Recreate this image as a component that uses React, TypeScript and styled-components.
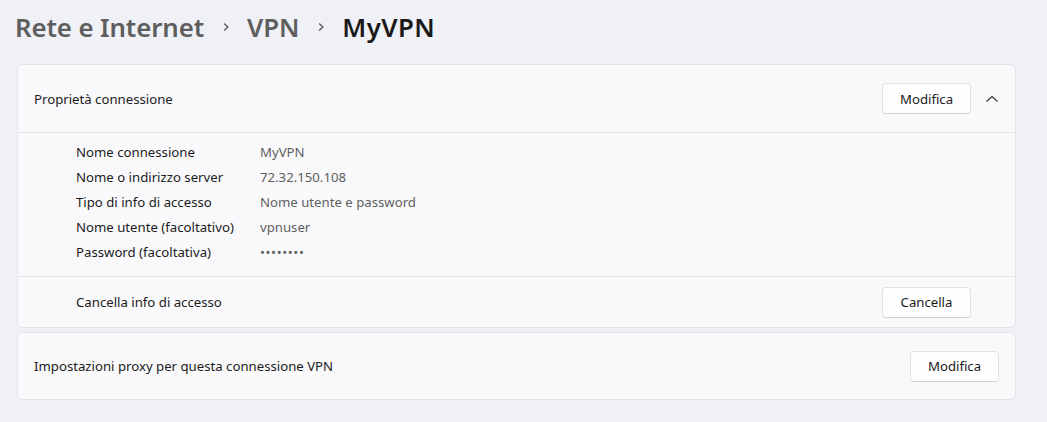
import React from "react";
import styled, { createGlobalStyle } from "styled-components";

const Global = createGlobalStyle`
  html, body { margin: 0; padding: 0; background: #f0f1f6; }
  body { font-family: "Segoe UI", "Noto Sans", "Open Sans", sans-serif; color: #1b1b1b; }
`;

const Page = styled.div`
  width: 1047px;
  height: 422px;
  box-sizing: border-box;
  padding: 7px 31px 0 17px;
  display: flex;
  flex-direction: column;
`;

const Breadcrumb = styled.div`
  display: flex;
  align-items: center;
  height: 40px;
  margin-left: -2px;
  margin-bottom: 17px;
  font-size: 25.8px;
  font-weight: 600;
  letter-spacing: -0.1px;
`;

const Crumb = styled.span<{ $current?: boolean }>`
  color: ${(p) => (p.$current ? "#1a1a1a" : "#5e5e5e")};
  letter-spacing: ${(p) => (p.$current ? "0.4px" : "-0.1px")};
`;

const Sep = styled.span`
  display: inline-flex;
  width: 43px;
  justify-content: center;
  color: #5e5e5e;
`;

const Card = styled.div`
  background: #f9f9fb;
  border: 1px solid #e4e4e8;
  border-radius: 5px;
  margin-bottom: 4px;
  display: flex;
  flex-direction: column;
`;

const Row = styled.div<{ $indent?: boolean; $h: number; $divider?: boolean }>`
  display: flex;
  align-items: center;
  height: ${(p) => p.$h}px;
  padding: 0 16px 0 ${(p) => (p.$indent ? 58 : 16)}px;
  font-size: 13.2px;
  border-bottom: ${(p) => (p.$divider ? "1px solid #e6e6ea" : "none")};
`;

const Label = styled.div`
  flex: 1;
`;

const Button = styled.button`
  width: 89px;
  height: 31px;
  box-sizing: border-box;
  background: #fefefe;
  border: 1px solid #e3e3e3;
  border-bottom-color: #d0d0d0;
  border-radius: 4px;
  font: inherit;
  font-size: 13.2px;
  color: #1b1b1b;
`;

const ChevronBox = styled.div`
  width: 28px;
  display: flex;
  justify-content: flex-end;
`;

const Details = styled.div`
  display: grid;
  grid-template-columns: 184px 1fr;
  grid-auto-rows: 25px;
  align-items: center;
  padding: 6px 0 12px 58px;
  font-size: 13.2px;
  border-bottom: 1px solid #e6e6ea;
`;

const Value = styled.div`
  color: #5f5f5f;
`;

const Dots = styled.span`
  letter-spacing: 0.6px;
`;

const ChevronUp = () => (
  <svg width="14" height="14" viewBox="0 0 14 14">
    <path d="M1.5 9.5 L7 4.5 L12.5 9.5" fill="none" stroke="#333" strokeWidth="1.1" />
  </svg>
);

const ChevronRight = () => (
  <svg width="10" height="14" viewBox="0 0 10 14">
    <path d="M3.2 3.5 L6.8 7 L3.2 10.5" fill="none" stroke="#5e5e5e" strokeWidth="1.4" />
  </svg>
);

const props: [string, React.ReactNode][] = [
  ["Nome connessione", "MyVPN"],
  ["Nome o indirizzo server", "72.32.150.108"],
  ["Tipo di info di accesso", "Nome utente e password"],
  ["Nome utente (facoltativo)", "vpnuser"],
  ["Password (facoltativa)", <Dots>••••••••</Dots>],
];

export default function App() {
  return (
    <>
      <Global />
      <Page>
        <Breadcrumb>
          <Crumb>Rete e Internet</Crumb>
          <Sep><ChevronRight /></Sep>
          <Crumb>VPN</Crumb>
          <Sep><ChevronRight /></Sep>
          <Crumb $current>MyVPN</Crumb>
        </Breadcrumb>
        <Card>
          <Row $h={67} $divider>
            <Label>Proprietà connessione</Label>
            <Button>Modifica</Button>
            <ChevronBox><ChevronUp /></ChevronBox>
          </Row>
          <Details>
            {props.map(([k, v]) => (
              <React.Fragment key={k}>
                <div>{k}</div>
                <Value>{v}</Value>
              </React.Fragment>
            ))}
          </Details>
          <Row $h={50} $indent>
            <Label>Cancella info di accesso</Label>
            <Button>Cancella</Button>
            <ChevronBox />
          </Row>
        </Card>
        <Card>
          <Row $h={66}>
            <Label>Impostazioni proxy per questa connessione VPN</Label>
            <Button>Modifica</Button>
          </Row>
        </Card>
      </Page>
    </>
  );
}
